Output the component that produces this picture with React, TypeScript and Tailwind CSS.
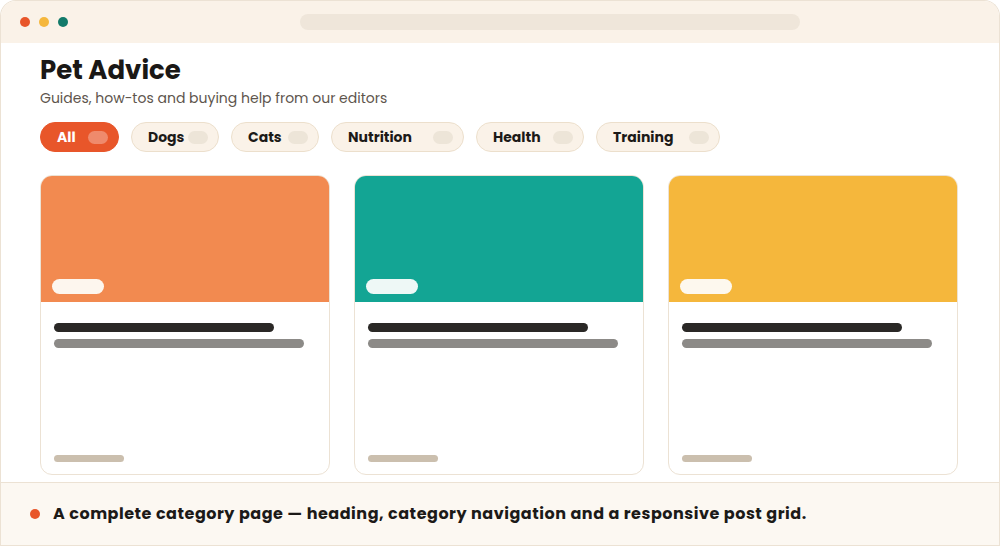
const categories = [
    { name: 'All', width: 'w-[79px]', active: true },
    { name: 'Dogs', width: 'w-[88px]', active: false },
    { name: 'Cats', width: 'w-[88px]', active: false },
    { name: 'Nutrition', width: 'w-[133px]', active: false },
    { name: 'Health', width: 'w-[108px]', active: false },
    { name: 'Training', width: 'w-[124px]', active: false },
];

const posts = [
    { cover: 'bg-[#f28a50]', badge: 'bg-[#fdf6ee]' },
    { cover: 'bg-[#13a594]', badge: 'bg-[#eef8f6]' },
    { cover: 'bg-[#f5b73c]', badge: 'bg-[#fdf8ee]' },
];

const PostCard = ({ cover, badge }: { cover: string; badge: string }) => (
    <div className="h-[300px] rounded-xl border-[1.5px] border-[#ece2d4] bg-white overflow-hidden flex flex-col">
        <div className={`h-[126px] ${cover} flex items-end px-[11px] pb-[8px]`}>
            <span className={`block w-[52px] h-[15px] rounded-full ${badge}`} />
        </div>
        <div className="flex-1 flex flex-col px-[13px] pt-[21px] pb-[12px]">
            <span className="block w-[220px] h-[9px] rounded-full bg-[#2a2826]" />
            <span className="block w-[250px] h-[9px] rounded-full bg-[#8c8a87] mt-[7px]" />
            <span className="block w-[70px] h-[7px] rounded-full bg-[#cbbfae] mt-auto" />
        </div>
    </div>
);

export default function App() {
    return (
        <div className="w-[1000px] h-[546px] bg-white flex flex-col font-['Poppins','Inter',sans-serif] text-[#1c1a18]">
            <div className="flex-1 min-h-0 rounded-t-2xl border-x-[1.5px] border-t-[1.5px] border-[#ece2d4] overflow-hidden flex flex-col">
                <div className="h-[42px] shrink-0 bg-[#faf2e8] flex items-center px-[19px]">
                    <div className="flex gap-[9px]">
                        <span className="w-[10px] h-[10px] rounded-full bg-[#e8562a]" />
                        <span className="w-[10px] h-[10px] rounded-full bg-[#f5b73c]" />
                        <span className="w-[10px] h-[10px] rounded-full bg-[#127a6a]" />
                    </div>
                    <div className="ml-[232px] w-[500px] h-[16px] rounded-full bg-[#efe6da]" />
                </div>
                <div className="flex-1 px-[39px] pt-[11px]">
                    <h1 className="text-[26px] leading-[32px] font-bold text-[#1a1816]">Pet Advice</h1>
                    <p className="mt-[2px] text-[14px] leading-[20px] text-[#5e554d]">Guides, how-tos and buying help from our editors</p>
                    <div className="mt-[14px] flex gap-[12px]">
                        {categories.map((c) => (
                            <div
                                key={c.name}
                                className={`${c.width} h-[30px] rounded-full flex items-center justify-between pl-[16px] pr-[10px] border ${
                                    c.active ? 'bg-[#e8562a] border-[#e8562a] text-white' : 'bg-[#faf2e8] border-[#ecdfcc] text-[#1c1a18]'
                                }`}
                            >
                                <span className="text-[14px] font-bold">{c.name}</span>
                                <span className={`w-[20px] h-[13px] rounded-full ${c.active ? 'bg-[#ef8a6c]' : 'bg-[#ede5d8]'}`} />
                            </div>
                        ))}
                    </div>
                    <div className="mt-[23px] grid grid-cols-3 gap-[24px] w-[918px]">
                        {posts.map((p, i) => (
                            <PostCard key={i} cover={p.cover} badge={p.badge} />
                        ))}
                    </div>
                </div>
            </div>
            <div className="h-[64px] shrink-0 border-[1.5px] border-[#ece2d4] bg-[#fcf8f2] flex items-center pl-[29px]">
                <span className="w-[10px] h-[10px] rounded-full bg-[#e8562a]" />
                <span className="ml-[13px] text-[16px] font-bold tracking-[0.52px] text-[#1c1a18]">
                    A complete category page — heading, category navigation and a responsive post grid.
                </span>
            </div>
        </div>
    );
}
